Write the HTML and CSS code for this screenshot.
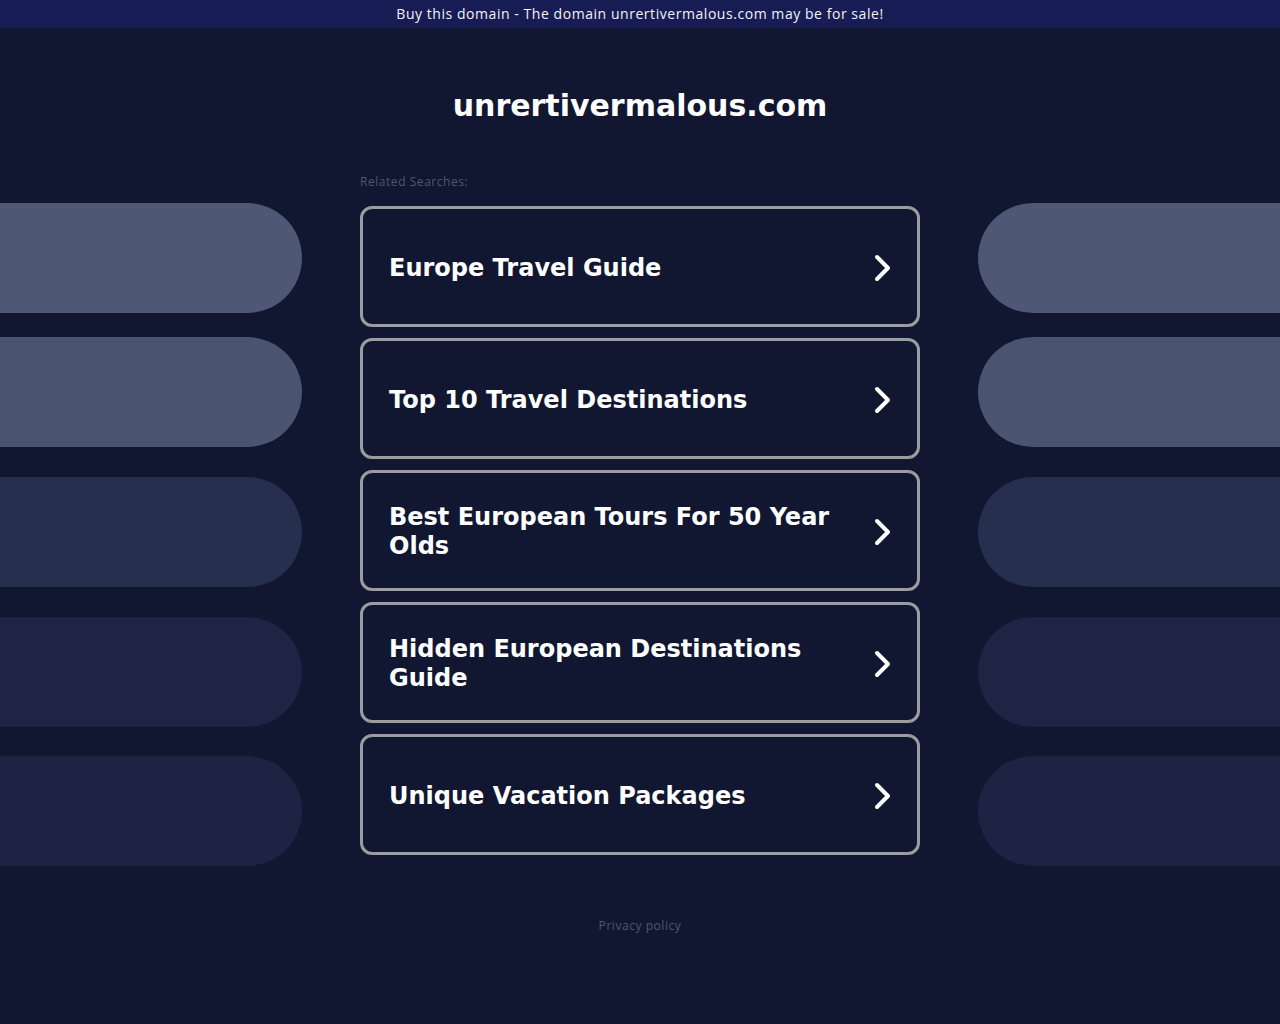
FILE: index.html
```html
<!DOCTYPE html>
<html lang="en">
<head>
<meta charset="utf-8">
<title>unrertivermalous.com</title>
<link rel="stylesheet" href="styles.css">
</head>
<body>
<div class="topbar">Buy this domain - The domain unrertivermalous.com may be for sale!</div>
<h1 class="domain">unrertivermalous.com</h1>
<div class="layout">
  <div class="side side-left">
    <div class="pill p1"></div>
    <div class="pill p2"></div>
    <div class="pill p3"></div>
    <div class="pill p4"></div>
    <div class="pill p5"></div>
  </div>
  <div class="center">
    <div class="related">Related Searches:</div>
    <div class="cards">
      <a class="card" href="#"><span class="card-text">Europe Travel Guide</span><svg class="chev" viewBox="0 0 20 30"><polyline points="4,4 15,15 4,26"/></svg></a>
      <a class="card" href="#"><span class="card-text">Top 10 Travel Destinations</span><svg class="chev" viewBox="0 0 20 30"><polyline points="4,4 15,15 4,26"/></svg></a>
      <a class="card" href="#"><span class="card-text">Best European Tours For 50 Year Olds</span><svg class="chev" viewBox="0 0 20 30"><polyline points="4,4 15,15 4,26"/></svg></a>
      <a class="card" href="#"><span class="card-text">Hidden European Destinations Guide</span><svg class="chev" viewBox="0 0 20 30"><polyline points="4,4 15,15 4,26"/></svg></a>
      <a class="card" href="#"><span class="card-text">Unique Vacation Packages</span><svg class="chev" viewBox="0 0 20 30"><polyline points="4,4 15,15 4,26"/></svg></a>
    </div>
  </div>
  <div class="side side-right">
    <div class="pill p1"></div>
    <div class="pill p2"></div>
    <div class="pill p3"></div>
    <div class="pill p4"></div>
    <div class="pill p5"></div>
  </div>
</div>
<div class="footer"><a href="#">Privacy policy</a></div>
</body>
</html>
```
FILE: styles.css
```css
html, body {
  margin: 0;
  padding: 0;
}
body {
  background: #121731;
  min-height: 1024px;
  font-family: "DejaVu Sans", sans-serif;
  color: #fff;
}
.topbar {
  height: 28px;
  line-height: 28px;
  background: #181c55;
  color: #f2f2f5;
  text-align: center;
  font-family: "Open Sans", "Noto Sans", sans-serif;
  font-size: 14px;
  font-weight: 500;
  letter-spacing: 0.55px;
}
.domain {
  margin: 58px 0 0;
  height: 40px;
  line-height: 40px;
  text-align: center;
  font-size: 30px;
  font-weight: bold;
  color: #fff;
}
.layout {
  display: flex;
  justify-content: space-between;
  margin-top: 43px;
}
.side {
  width: 302px;
  display: flex;
  flex-direction: column;
}
.pill {
  height: 110px;
}
.side-left .pill {
  border-radius: 0 55px 55px 0;
}
.side-right .pill {
  border-radius: 55px 0 0 55px;
}
.p1 { margin-top: 34px; background: #4e5774; }
.p2 { margin-top: 24px; background: #4a5370; }
.p3 { margin-top: 30px; background: #272f4f; }
.p4 { margin-top: 30px; background: #1d2444; }
.p5 { margin-top: 29px; background: #1c2343; }
.center {
  width: 560px;
}
.related {
  font-family: "Open Sans", "Noto Sans", sans-serif;
  font-size: 12px;
  line-height: 16px;
  letter-spacing: 0.55px;
  color: #4e5674;
  margin-top: 5px;
  height: 17px;
}
.cards {
  display: flex;
  flex-direction: column;
  gap: 11px;
  margin-top: 15px;
}
.card {
  display: flex;
  align-items: center;
  height: 115px;
  border: 3px solid #9a9c9f;
  border-radius: 12px;
  padding: 0 24px 0 26px;
  text-decoration: none;
  color: #fff;
}
.card-text {
  flex: 1;
  font-size: 24px;
  font-weight: bold;
  line-height: 29px;
  padding-top: 3px;
  padding-right: 40px;
}
.chev {
  width: 20px;
  height: 30px;
  flex: none;
  margin-top: 2px;
}
.chev polyline {
  fill: none;
  stroke: #fff;
  stroke-width: 4;
  stroke-linecap: round;
  stroke-linejoin: round;
}
.footer {
  text-align: center;
  margin-top: 52px;
  font-family: "Open Sans", "Noto Sans", sans-serif;
  font-size: 12px;
  line-height: 16px;
  letter-spacing: 0.55px;
}
.footer a {
  color: #4e5674;
  text-decoration: none;
}
```
